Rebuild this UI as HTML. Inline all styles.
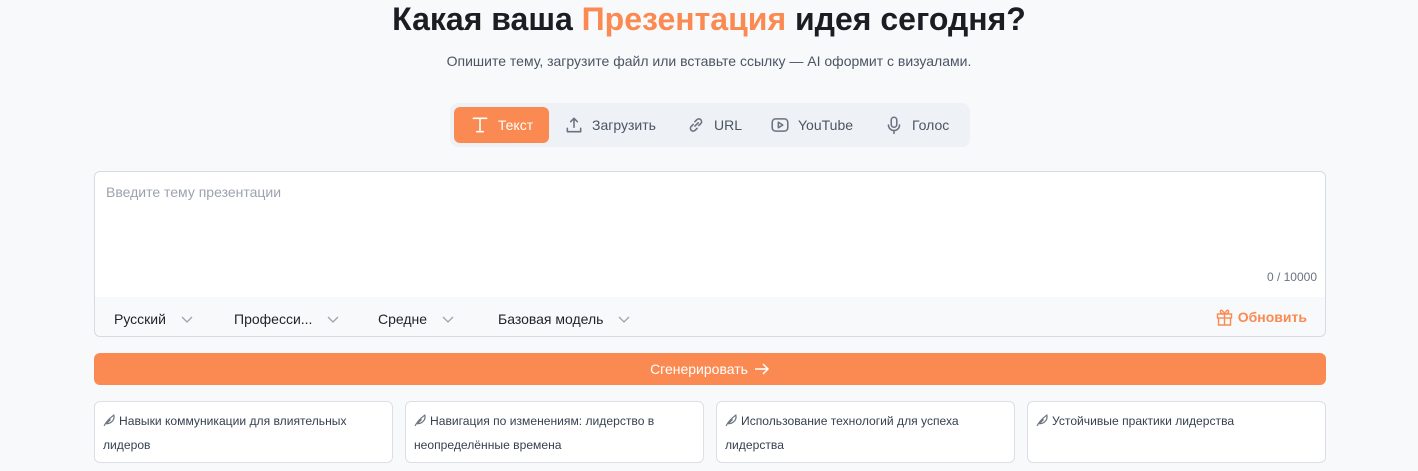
<!DOCTYPE html>
<html><head><meta charset="utf-8"><style>
*{box-sizing:border-box;margin:0;padding:0}
body{width:1418px;height:471px;background:#f8f9fb;font-family:"Liberation Sans",sans-serif;position:relative;overflow:hidden;color:#1f2329}
h1{position:absolute;top:1px;left:0;width:1418px;text-align:center;font-size:32px;font-weight:bold;color:#1a1d24}
h1 span{color:#fa8a52}
.sub{position:absolute;top:53px;width:1418px;text-align:center;font-size:14px;color:#4b5563}
.tabs{position:absolute;left:450px;top:103px;width:520px;height:44px;background:#eef1f6;border-radius:8px}
.tab{position:absolute;top:4px;height:36px;display:flex;align-items:center;font-size:14px;color:#4b5563;gap:8px}
.tab svg{width:20px;height:20px;fill:none;stroke:#6b7280;stroke-width:1.4;stroke-linecap:round;stroke-linejoin:round}
.tab.a{left:4px;width:95px;background:#fa8a52;border-radius:6px;color:#fff;justify-content:center}
.tab.a svg{stroke:#fff}
.card{position:absolute;left:94px;top:171px;width:1232px;height:166px;border:1px solid #d5dae3;border-radius:6px;background:#f8f9fb;overflow:hidden}
.ta{height:125px;background:#fff;position:relative}
.ph{position:absolute;left:11px;top:12px;font-size:14px;color:#9ca3af}
.cnt{position:absolute;right:8px;top:98px;font-size:12px;color:#6b7280}
.sel{position:absolute;top:139px;font-size:14px;color:#1f2329;display:flex;align-items:center}
.sel svg{margin-left:14px;width:14px;height:14px;fill:none;stroke:#9ca3af;stroke-width:1.3}
.upd{position:absolute;right:18px;top:136px;font-size:14px;font-weight:bold;color:#fa8a52;display:flex;align-items:center;gap:5px}
.btn{position:absolute;left:94px;top:353px;width:1232px;height:32px;background:#fa8a52;border-radius:6px;color:#fff;font-size:14px;display:flex;align-items:center;justify-content:center;gap:6px}
.sg{position:absolute;top:401px;height:62px;background:#fff;border:1px solid #dcdfe5;border-radius:6px;font-size:12.1px;line-height:24px;color:#374151;padding:7px 8px}
.sg svg{width:13px;height:13px;fill:none;stroke:#6b7280;stroke-width:1.1;vertical-align:-2px;margin-right:3px}
</style></head><body>
<h1>Какая ваша <span>Презентация</span> идея сегодня?</h1>
<div class="sub">Опишите тему, загрузите файл или вставьте ссылку — AI оформит с визуалами.</div>
<div class="tabs">
<div class="tab a"><svg viewBox="0 0 18 18"><path d="M3 3h12M9 3v12M6 15h6"/></svg>Текст</div>
<div class="tab" style="left:114px"><svg viewBox="0 0 18 18"><path d="M9 11V3M6 6l3-3 3 3M3 12v3h12v-3"/></svg>Загрузить</div>
<div class="tab" style="left:236px"><svg viewBox="0 0 18 18"><path d="M8 10l3-3M6.5 8.5l-2 2a2.5 2.5 0 003.5 3.5l2-2M11.5 9.5l2-2A2.5 2.5 0 0010 4l-2 2"/></svg>URL</div>
<div class="tab" style="left:320px"><svg viewBox="0 0 18 18"><rect x="2" y="3.5" width="14" height="11" rx="3"/><path d="M7.5 6.5v5l4-2.5z"/></svg>YouTube</div>
<div class="tab" style="left:434px"><svg viewBox="0 0 18 18"><rect x="6.5" y="2" width="5" height="9" rx="2.5"/><path d="M4 9a5 5 0 0010 0M9 14v2.5"/></svg>Голос</div>
</div>
<div class="card">
<div class="ta"><div class="ph">Введите тему презентации</div><div class="cnt">0 / 10000</div></div>
<div class="sel" style="left:19px">Русский<svg viewBox="0 0 14 14"><path d="M2 5l5 5 5-5"/></svg></div>
<div class="sel" style="left:139px">Професси...<svg viewBox="0 0 14 14"><path d="M2 5l5 5 5-5"/></svg></div>
<div class="sel" style="left:283px">Средне<svg viewBox="0 0 14 14"><path d="M2 5l5 5 5-5"/></svg></div>
<div class="sel" style="left:403px">Базовая модель<svg viewBox="0 0 14 14"><path d="M2 5l5 5 5-5"/></svg></div>
<div class="upd"><svg width="17" height="18" viewBox="0 0 17 18" fill="none" stroke="#fa8a52" stroke-width="1.4"><rect x="1.5" y="6" width="14" height="4"/><path d="M2.5 10v7h12v-7M8.5 6v11M8.5 6C6 6 4 5 4.5 3s3 0 4 3c1-3 3.5-5 4-3s-1.5 3-4 3"/></svg>Обновить</div>
</div>
<div class="btn">Сгенерировать <svg width="16" height="12" viewBox="0 0 16 12" fill="none" stroke="#fff" stroke-width="1.5"><path d="M1 6h13M9 1l5 5-5 5"/></svg></div>
<div class="sg" style="left:94px;width:299px"><svg viewBox="0 0 12 12"><path d="M1 11C3 7 6 4 10 1c1 4-2 8-7 8M3 9l4-4"/></svg>Навыки коммуникации для влиятельных лидеров</div>
<div class="sg" style="left:405px;width:299px"><svg viewBox="0 0 12 12"><path d="M1 11C3 7 6 4 10 1c1 4-2 8-7 8M3 9l4-4"/></svg>Навигация по изменениям: лидерство в неопределённые времена</div>
<div class="sg" style="left:716px;width:299px"><svg viewBox="0 0 12 12"><path d="M1 11C3 7 6 4 10 1c1 4-2 8-7 8M3 9l4-4"/></svg>Использование технологий для успеха лидерства</div>
<div class="sg" style="left:1027px;width:299px"><svg viewBox="0 0 12 12"><path d="M1 11C3 7 6 4 10 1c1 4-2 8-7 8M3 9l4-4"/></svg>Устойчивые практики лидерства</div>
</body></html>
